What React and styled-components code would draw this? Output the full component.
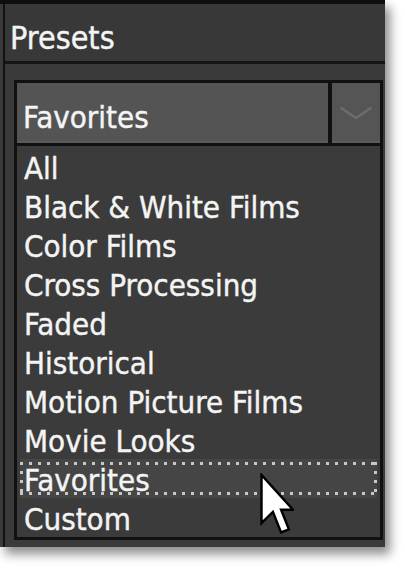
import React from 'react';
import styled, { createGlobalStyle } from 'styled-components';

const presets = [
  'All',
  'Black & White Films',
  'Color Films',
  'Cross Processing',
  'Faded',
  'Historical',
  'Motion Picture Films',
  'Movie Looks',
  'Favorites',
  'Custom',
];

export default function App() {
  return (
    <Page>
      <GlobalStyle />
      <Window>
        <Inner>
          <Header>Presets</Header>
          <Body>
            <Combo>
              <ComboField>Favorites</ComboField>
              <ComboDivider />
              <ComboButton>
                <svg width="34" height="14" viewBox="0 0 34 14">
                  <polyline
                    points="1.5,1.5 17,12 32.5,1.5"
                    fill="none"
                    stroke="#6c6c6c"
                    strokeWidth="2.4"
                  />
                </svg>
              </ComboButton>
            </Combo>
            <List>
              {presets.map(name => (
                <Item key={name} focused={name === 'Favorites'}>
                  {name}
                </Item>
              ))}
            </List>
          </Body>
        </Inner>
        <Cursor width="34" height="64" viewBox="0 0 11.3 21">
          {/* plain windows arrow, scaled up */}
          <path
            d="M0.5 0.5 L0.5 16.5 L4.3 12.8 L7 19.6 L9.6 18.6 L7 12.1 L11 12.1 Z"
            fill="#fff"
            stroke="#000"
            strokeWidth="0.8"
            strokeLinejoin="miter"
          />
        </Cursor>
      </Window>
    </Page>
  );
}

const GlobalStyle = createGlobalStyle`
  html, body {
    margin: 0;
    padding: 0;
    background: #fff;
  }
`;

const Page = styled.div`
  width: 405px;
  height: 568px;
  background: #fff;
  overflow: hidden;
`;

const Window = styled.div`
  position: relative;
  width: 385px;
  height: 547px;
  box-sizing: border-box;
  display: flex;
  flex-direction: column;
  background: #3a3a3a;
  border-top: 4px solid #0e0e0e;
  padding-left: 3px;
  box-shadow: 5px 7px 10px rgba(0, 0, 0, 0.45);
  font-family: 'DejaVu Sans', Tahoma, sans-serif;
  font-stretch: condensed;
  font-size: 31px;
  color: #f4f4f4;
  -webkit-text-stroke: 0.4px #f4f4f4;
`;

const Inner = styled.div`
  flex: 1;
  display: flex;
  flex-direction: column;
  border-left: 2px solid #111;
`;

const Header = styled.div`
  height: 60px;
  box-sizing: border-box;
  display: flex;
  align-items: center;
  padding: 10px 0 0 5px;
  background: #383838;
  border-bottom: 3px solid #141414;
  font-size: 32px;
`;

const Body = styled.div`
  flex: 1;
  padding: 16px 2px 0 9px;
  display: flex;
  flex-direction: column;
`;

const Combo = styled.div`
  display: flex;
  height: 66px;
  box-sizing: border-box;
  border: 3px solid #111;
  background: #111;
`;

const ComboField = styled.div`
  flex: 1;
  display: flex;
  align-items: center;
  padding: 9px 0 0 6px;
  background: #545454;
  border-bottom: 2px solid #5b5b5b;
`;

const ComboDivider = styled.div`
  width: 4px;
  background: #111;
`;

const ComboButton = styled.div`
  width: 48px;
  display: flex;
  align-items: center;
  justify-content: center;
  padding-top: 2px;
  background: #555;
  border-bottom: 2px solid #5b5b5b;
`;

const List = styled.div`
  border: 3px solid #111;
  border-top: 0;
  background: #3b3b3b;
  padding-top: 1px;
`;

const Item = styled.div`
  height: 39px;
  line-height: 42px;
  padding-left: 7px;
  white-space: nowrap;
  background-color: ${p => (p.focused ? '#454545' : 'transparent')};
  ${p =>
    p.focused &&
    `
    margin: 0 3px 0 3px;
    padding-left: 4px;
    background-image:
      repeating-linear-gradient(90deg, #c8c8c8 0 3px, transparent 3px 9px),
      repeating-linear-gradient(90deg, #c8c8c8 0 3px, transparent 3px 9px),
      repeating-linear-gradient(180deg, #c8c8c8 0 3px, transparent 3px 9px),
      repeating-linear-gradient(180deg, #c8c8c8 0 3px, transparent 3px 9px);
    background-size: 100% 3px, 100% 3px, 3px 100%, 3px 100%;
    background-position: 0 3px, 0 33px, 0 3px, 100% 3px;
    background-repeat: no-repeat;
  `}
`;

const Cursor = styled.svg`
  position: absolute;
  left: 260px;
  top: 469px;
`;
